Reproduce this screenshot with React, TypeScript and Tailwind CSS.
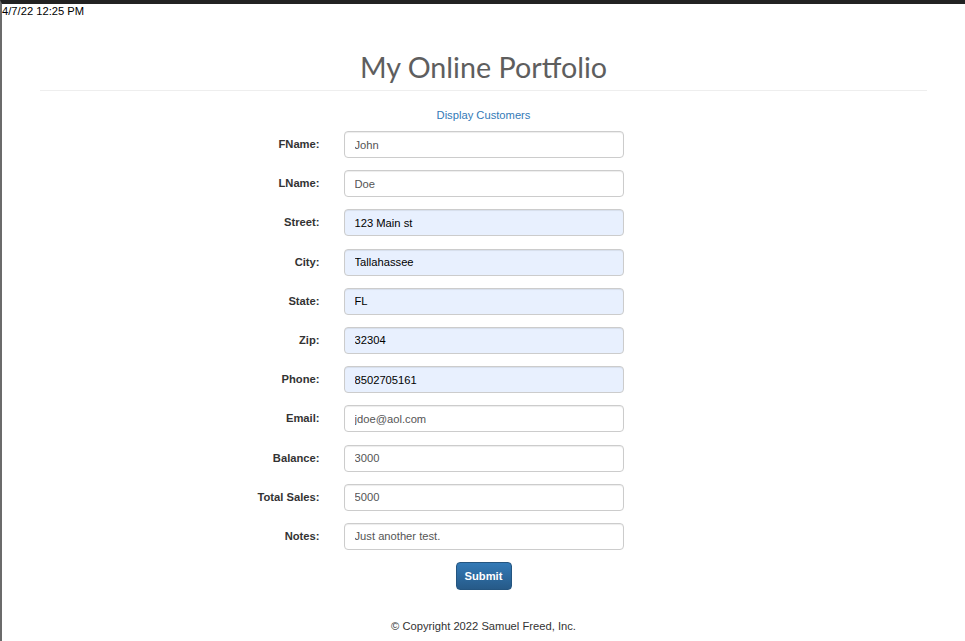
import React from "react";

const fields: { label: string; value: string; autofill?: boolean }[] = [
  { label: "FName:", value: "John" },
  { label: "LName:", value: "Doe" },
  { label: "Street:", value: "123 Main st", autofill: true },
  { label: "City:", value: "Tallahassee", autofill: true },
  { label: "State:", value: "FL", autofill: true },
  { label: "Zip:", value: "32304", autofill: true },
  { label: "Phone:", value: "8502705161", autofill: true },
  { label: "Email:", value: "jdoe@aol.com" },
  { label: "Balance:", value: "3000" },
  { label: "Total Sales:", value: "5000" },
  { label: "Notes:", value: "Just another test." },
];

export default function App() {
  return (
    <div className="min-h-[641px] w-full border-t-4 border-l-2 border-t-[#222222] border-l-[#6b6b6b] bg-white font-['Liberation_Sans',Arial,sans-serif] text-[11.2px] text-[#333333]">
      <div className="h-[14px] leading-[14px] text-black">4/7/22 12:25 PM</div>

      <div className="mx-[38px]">
        <h1 className="mt-[31px] mb-[5px] text-center font-['Lato',sans-serif] text-[28.7px] leading-[36px] text-[#5e5e5e]">
          My Online Portfolio
        </h1>
        <div className="border-t border-[#eeeeee]" />
      </div>

      <div className="mt-[16px] text-center leading-[16px] text-[#337ab7]">Display Customers</div>

      <form className="mt-[8px] flex flex-col gap-[12.2px]">
        {fields.map((f) => (
          <div key={f.label} className="grid grid-cols-[1fr_280px_1fr] items-center">
            <label className="pr-[24px] text-right font-bold text-[#333333]">{f.label}</label>
            <input
              readOnly
              value={f.value}
              className={
                f.autofill
                  ? "h-[27px] w-[280px] rounded-[4px] border border-[#cccccc] bg-[#e8f0fe] px-[10px] text-[11.2px] text-black shadow-[inset_0_1px_1px_rgba(0,0,0,0.075)] outline-none"
                  : "h-[27px] w-[280px] rounded-[4px] border border-[#cccccc] bg-white px-[10px] text-[11.2px] text-[#555555] shadow-[inset_0_1px_1px_rgba(0,0,0,0.075)] outline-none"
              }
            />
            <div />
          </div>
        ))}

        <div className="flex justify-center">
          <button
            type="button"
            className="h-[28px] w-[56px] rounded-[4px] border border-[#245580] bg-gradient-to-b from-[#337ab7] to-[#265a88] text-[11.2px] font-bold text-white"
          >
            Submit
          </button>
        </div>
      </form>

      <footer className="mt-[28px] text-center leading-[16px] text-[#333333]">© Copyright 2022 Samuel Freed, Inc.</footer>
    </div>
  );
}
